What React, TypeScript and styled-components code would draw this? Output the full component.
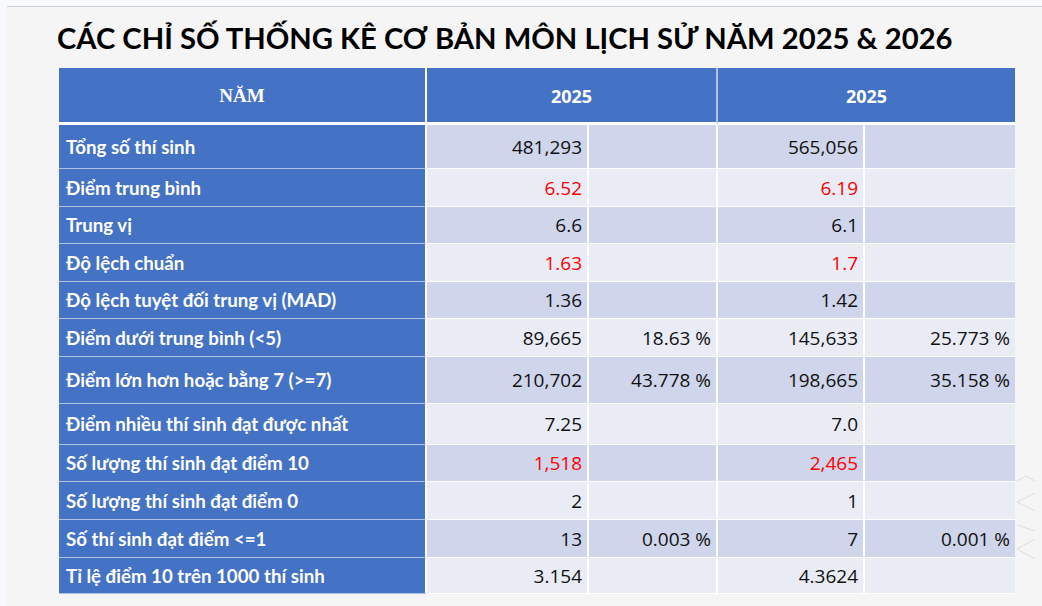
import React from "react";
import styled, { createGlobalStyle } from "styled-components";

const Global = createGlobalStyle`
  html, body { margin: 0; padding: 0; background: #f8f9fc; }
  body { width: 1042px; height: 606px; overflow: hidden; }
  #root { height: 606px; }
`;

const Page = styled.div`
  height: 606px;
  padding: 6px 0 0 7px;
  box-sizing: border-box;
`;

const Panel = styled.section`
  position: relative;
  height: 600px;
  box-sizing: border-box;
  background: #f5f5f5;
  border-top: 1px solid #d2d2d2;
  padding: 0 0 0 50px;
  display: flex;
  flex-direction: column;
`;

const Title = styled.h1`
  margin: 0;
  height: 61px;
  display: flex;
  align-items: center;
  font-family: Lato, "Noto Sans", sans-serif;
  font-weight: 700;
  font-size: 29.2px;
  color: #000;
  white-space: nowrap;
`;

const Grid = styled.div`
  margin-left: 2px;
  display: grid;
  grid-template-columns: 368px 162px 129px 147px 150px;
  grid-template-rows: 57px 44px 38px 37px 38px 37px 38px 47px 41px 37px 38px 38px 36px;
  width: 956px;
`;

const HeadCell = styled.div<{ $span?: number; $last?: boolean; $first?: boolean }>`
  grid-column: span ${(p) => p.$span ?? 1};
  background: #4472c4;
  box-sizing: border-box;
  border-bottom: 3px solid #ffffff;
  border-right: ${(p) => (p.$last ? "none" : p.$first ? "2px solid #ffffff" : "2px solid #b5c4e6")};
  display: flex;
  align-items: center;
  justify-content: center;
  color: #fff;
  font-weight: 700;
  font-family: ${(p) => (p.$first ? '"Liberation Serif", serif' : '"Open Sans", sans-serif')};
  font-size: ${(p) => (p.$first ? "19px" : "18px")};
  padding-top: 2px;
`;

const LabelCell = styled.div`
  background: #4472c4;
  box-sizing: border-box;
  border-bottom: 1.5px solid #b0c3e6;
  border-right: 2px solid #ffffff;
  display: flex;
  align-items: center;
  padding-left: 7px;
  color: #fff;
  font-family: Lato, "Noto Sans", sans-serif;
  font-weight: 700;
  font-size: 18.7px;
  white-space: nowrap;
`;

const DataCell = styled.div<{ $alt: boolean; $red?: boolean; $last?: boolean }>`
  background: ${(p) => (p.$alt ? "#cfd5ea" : "#e9ebf5")};
  box-sizing: border-box;
  border-bottom: 1.5px solid #ffffff;
  border-right: ${(p) => (p.$last ? "none" : "2px solid #ffffff")};
  display: flex;
  align-items: center;
  justify-content: flex-end;
  padding-right: 5px;
  color: ${(p) => (p.$red ? "#ff0000" : "#111111")};
  font-family: "Open Sans", "Noto Sans", sans-serif;
  font-size: 19px;
  white-space: nowrap;
`;

const Watermark = styled.svg`
  position: absolute;
  right: 6px;
  top: 460px;
`;

type Row = { label: string; a: string; ap?: string; b: string; bp?: string; red?: boolean };

const rows: Row[] = [
  { label: "Tổng số thí sinh", a: "481,293", b: "565,056" },
  { label: "Điểm trung bình", a: "6.52", b: "6.19", red: true },
  { label: "Trung vị", a: "6.6", b: "6.1" },
  { label: "Độ lệch chuẩn", a: "1.63", b: "1.7", red: true },
  { label: "Độ lệch tuyệt đối trung vị (MAD)", a: "1.36", b: "1.42" },
  { label: "Điểm dưới trung bình (<5)", a: "89,665", ap: "18.63 %", b: "145,633", bp: "25.773 %" },
  { label: "Điểm lớn hơn hoặc bằng 7 (>=7)", a: "210,702", ap: "43.778 %", b: "198,665", bp: "35.158 %" },
  { label: "Điểm nhiều thí sinh đạt được nhất", a: "7.25", b: "7.0" },
  { label: "Số lượng thí sinh đạt điểm 10", a: "1,518", b: "2,465", red: true },
  { label: "Số lượng thí sinh đạt điểm 0", a: "2", b: "1" },
  { label: "Số thí sinh đạt điểm <=1", a: "13", ap: "0.003 %", b: "7", bp: "0.001 %" },
  { label: "Tỉ lệ điểm 10 trên 1000 thí sinh", a: "3.154", b: "4.3624" },
];

export default function App() {
  return (
    <>
      <Global />
      <Page>
        <Panel>
          <Title>CÁC CHỈ SỐ THỐNG KÊ CƠ BẢN MÔN LỊCH SỬ NĂM 2025 &amp; 2026</Title>
          <Grid>
            <HeadCell $first>NĂM</HeadCell>
            <HeadCell $span={2}>2025</HeadCell>
            <HeadCell $span={2} $last>
              2025
            </HeadCell>
            {rows.map((r, i) => {
              const alt = i % 2 === 0;
              return (
                <React.Fragment key={r.label}>
                  <LabelCell>{r.label}</LabelCell>
                  <DataCell $alt={alt} $red={r.red}>{r.a}</DataCell>
                  <DataCell $alt={alt}>{r.ap ?? ""}</DataCell>
                  <DataCell $alt={alt} $red={r.red}>{r.b}</DataCell>
                  <DataCell $alt={alt} $last>{r.bp ?? ""}</DataCell>
                </React.Fragment>
              );
            })}
          </Grid>
          <Watermark width="20" height="100" viewBox="0 0 20 100">
            <g stroke="#dedede" strokeWidth="1" fill="none">
              <path d="M1 14 L10 9 L19 14" />
              <path d="M1 35 L19 26 M1 35 L19 44" />
              <path d="M1 58 L19 64" />
              <path d="M1 82 L19 72 M1 82 L19 92" />
            </g>
          </Watermark>
        </Panel>
      </Page>
    </>
  );
}
